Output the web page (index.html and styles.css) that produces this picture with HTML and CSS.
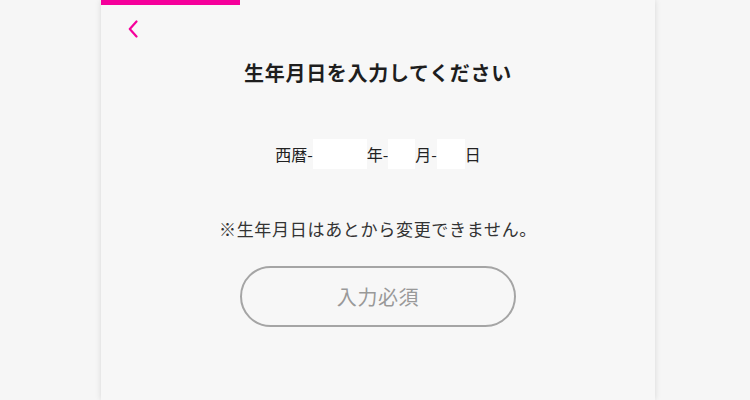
FILE: index.html
```html
<!DOCTYPE html>
<html lang="ja">
<head>
<meta charset="utf-8">
<link rel="stylesheet" href="styles.css">
</head>
<body>
<div class="card">
  <div class="progress"></div>
  <a class="back" href="#" aria-label="戻る">
    <svg width="10" height="18" viewBox="0 0 10 18"><polyline points="8.5,1.5 1.8,9 8.5,16.5" fill="none" stroke="#f5009b" stroke-width="2.2" stroke-linecap="round" stroke-linejoin="round"/></svg>
  </a>
  <h1 class="title">生年月日を入力してください</h1>
  <div class="date-row">
    <span class="label">西暦-</span>
    <span class="box box-year"></span>
    <span class="label">年-</span>
    <span class="box box-month"></span>
    <span class="label">月-</span>
    <span class="box box-day"></span>
    <span class="label">日</span>
  </div>
  <p class="note">※生年月日はあとから変更できません。</p>
  <button class="submit" type="button">入力必須</button>
</div>
</body>
</html>
```
FILE: styles.css
```css
html, body {
  margin: 0;
  padding: 0;
  background: #f6f6f6;
  font-family: "Noto Sans CJK JP", "Noto Sans", sans-serif;
  color: #222;
}
.card {
  width: 554px;
  margin-left: 101px;
  min-height: 400px;
  background: #f7f7f7;
  box-shadow: 0 0 6px rgba(0, 0, 0, 0.13);
  display: flex;
  flex-direction: column;
}
.progress {
  width: 139px;
  height: 5px;
  background: #f5009b;
}
.back {
  display: block;
  width: 10px;
  height: 18px;
  margin: 15px 0 0 27px;
}
.back svg {
  display: block;
}
.title {
  margin: 21px 0 0;
  font-size: 20px;
  line-height: 28px;
  font-weight: 700;
  letter-spacing: 0.7px;
  text-align: center;
  color: #1e1e1e;
}
.date-row {
  margin-top: 52px;
  height: 30px;
  display: flex;
  justify-content: center;
  align-items: center;
  font-size: 16px;
  color: #222;
}
.label {
  line-height: 30px;
}
.box {
  display: block;
  height: 30px;
  background: #ffffff;
}
.box-year { width: 54px; }
.box-month { width: 27px; }
.box-day { width: 28px; }
.note {
  margin: 48px 0 0;
  font-size: 17px;
  line-height: 24px;
  letter-spacing: 0.7px;
  text-align: center;
  color: #333;
}
.submit {
  display: block;
  margin: 25px auto 0;
  width: 276px;
  height: 61px;
  border: 2px solid #a5a5a5;
  border-radius: 31px;
  background: transparent;
  color: #999;
  font-family: inherit;
  font-size: 20px;
  letter-spacing: 0.6px;
}
```
